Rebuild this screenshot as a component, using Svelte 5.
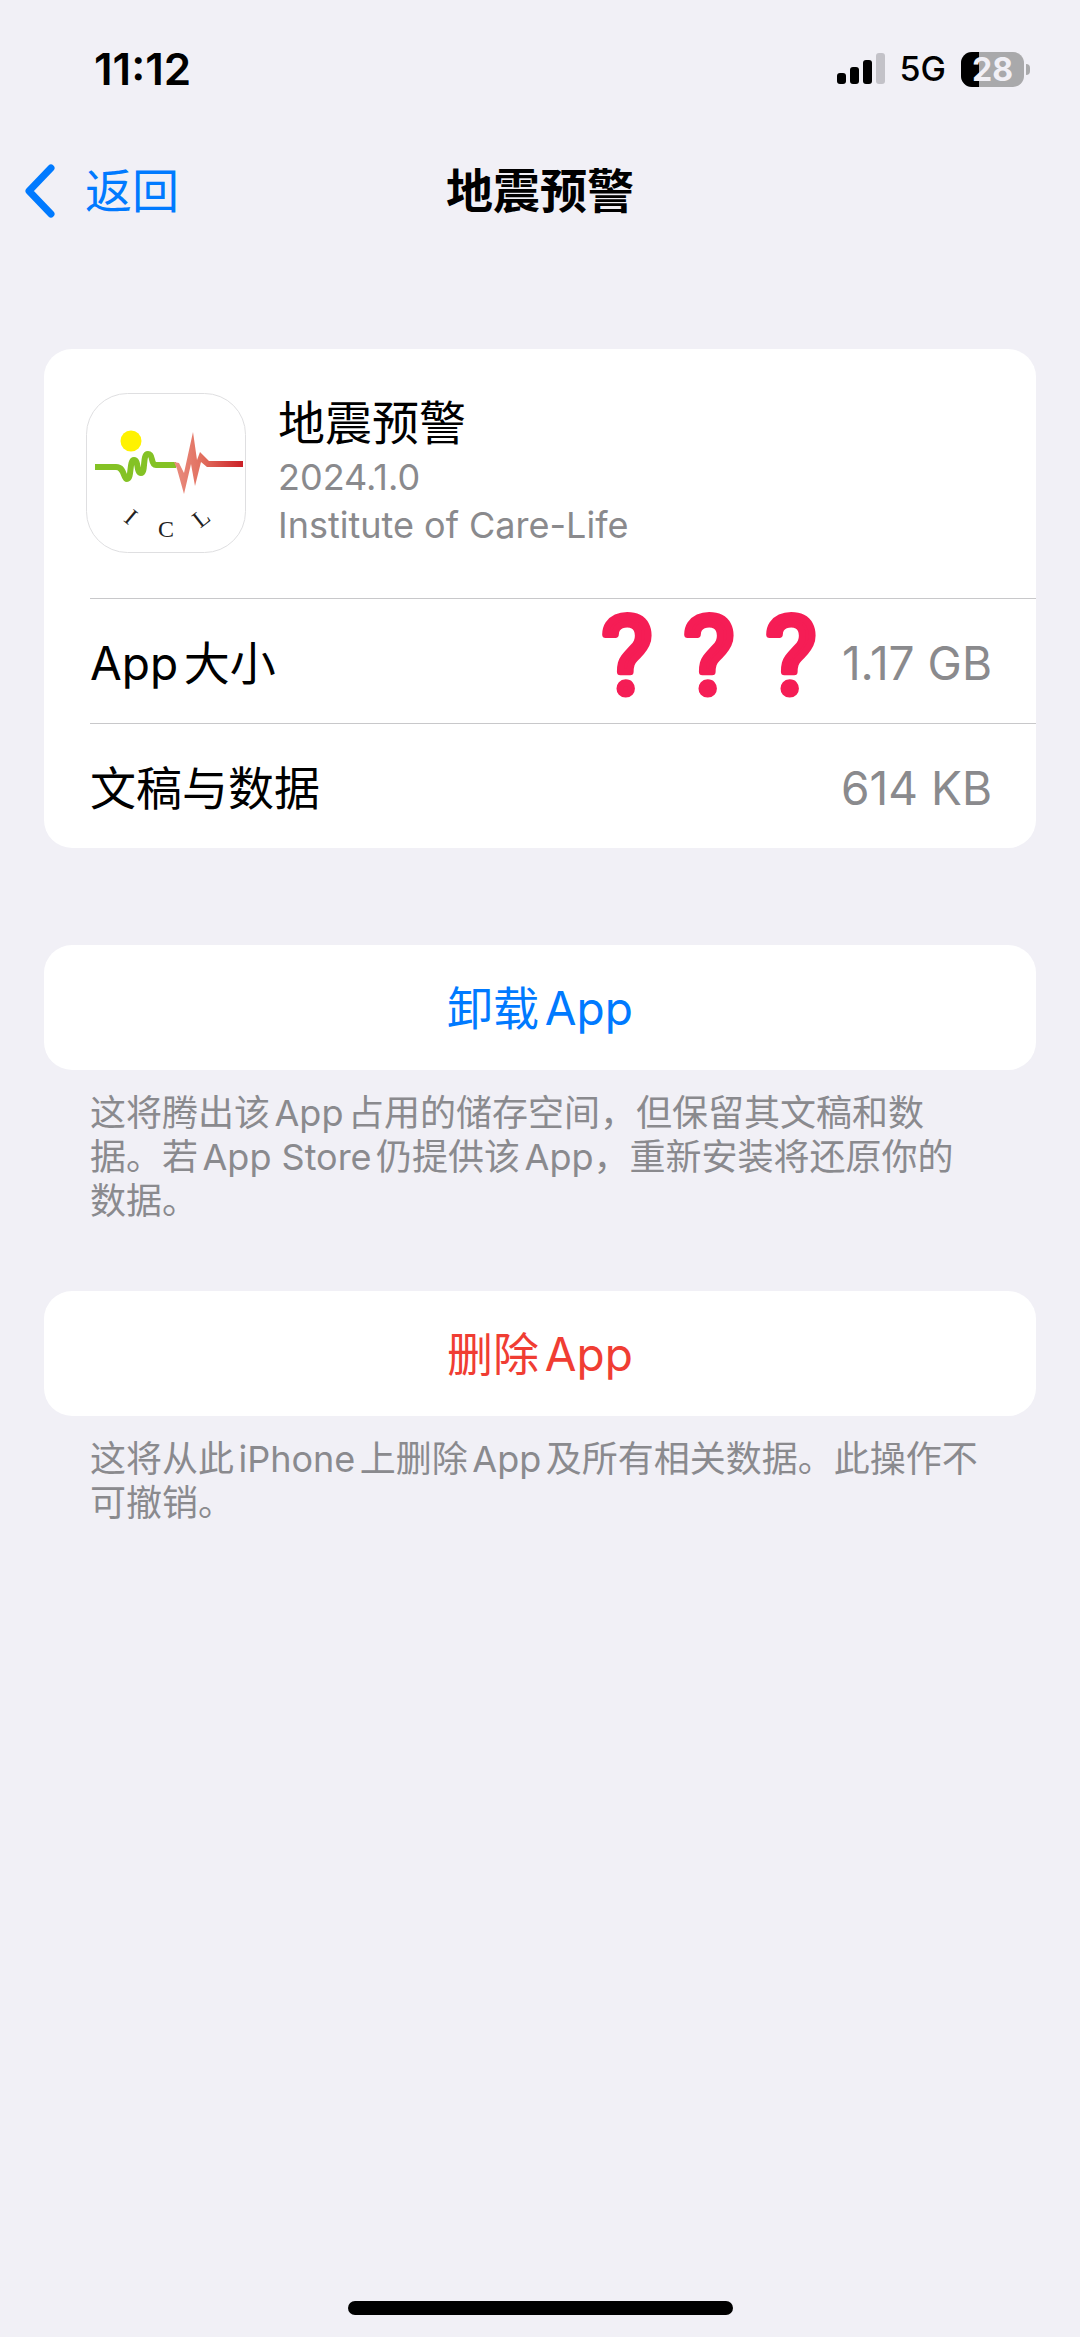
<script lang="ts">
  interface StorageRow {
    label: string;
    value: string;
    marks?: number;
  }

  const app = {
    name: '地震预警',
    version: '2024.1.0',
    vendor: 'Institute of Care-Life'
  };

  const rows: StorageRow[] = [
    { label: 'App大小', value: '1.17 GB', marks: 3 },
    { label: '文稿与数据', value: '614 KB' }
  ];

  const actions = [
    {
      label: '卸载App',
      danger: false,
      note: '这将腾出该App占用的储存空间，但保留其文稿和数据。若App Store仍提供该App，重新安装将还原你的数据。'
    },
    {
      label: '删除App',
      danger: true,
      note: '这将从此iPhone上删除App及所有相关数据。此操作不可撤销。'
    }
  ];

  const battery = 28;
  const markWidth = 82;
</script>

<div class="screen">
  <div class="status">
    <span class="time">11:12</span>
    <div class="indicators">
      <svg class="signal" viewBox="0 0 48 32" aria-hidden="true">
        <rect x="0" y="20" width="9" height="11" rx="3" />
        <rect x="13" y="14" width="9" height="17" rx="3" />
        <rect x="26" y="7" width="9" height="24" rx="3" />
        <rect class="off" x="39" y="0" width="9" height="31" rx="3" />
      </svg>
      <span class="network">5G</span>
      <div class="battery">
        <div class="cell">
          <div class="level" style="width: {battery}%"></div>
          <span class="percent">{battery}</span>
        </div>
        <div class="tip"></div>
      </div>
    </div>
  </div>

  <header class="nav">
    <a class="back" href="#back">
      <svg viewBox="0 0 30 54" aria-hidden="true">
        <path d="M26 4L4 27L26 50" />
      </svg>
      <span>返回</span>
    </a>
    <h1>{app.name}</h1>
  </header>

  <main>
    <section class="card">
      <div class="app">
        <svg class="icon" viewBox="0 0 160 160" aria-hidden="true">
          <defs>
            <linearGradient id="pulse" gradientUnits="userSpaceOnUse" x1="88" y1="0" x2="157" y2="0">
              <stop offset="0" stop-color="#e98d80" />
              <stop offset="0.4" stop-color="#e2705f" />
              <stop offset="1" stop-color="#cb2027" />
            </linearGradient>
          </defs>
          <rect class="frame" x="0.5" y="0.5" width="159" height="159" rx="41" />
          <circle cx="45" cy="48" r="10.5" fill="#fff200" />
          <path class="calm" d="M9 74H30C39 74 37 86 41 86C46 86 43 67 48 67C53 67 50 80 55 80C60 80 56 61 62 61C68 61 64 72 70 72H90" />
          <path fill="url(#pulse)" d="M88 69L93 70L98 80L107 39L111 67L114 59L123 68H157V74H121L115 69L109 93L105 71L98 101L91 76Z" />
          <g class="letters">
            <text transform="translate(45 124) rotate(40)" y="8">I</text>
            <text transform="translate(80 136)" y="8">C</text>
            <text transform="translate(115 125) rotate(-38)" y="8">L</text>
          </g>
        </svg>
        <div class="details">
          <h2>{app.name}</h2>
          <p>{app.version}</p>
          <p>{app.vendor}</p>
        </div>
      </div>
      <dl>
        {#each rows as row}
          <div class="row">
            <dt>{row.label}</dt>
            <dd>
              {#if row.marks}
                <svg class="marks" viewBox="0 0 {row.marks * markWidth} 140">
                  {#each Array(row.marks) as _, i}
                    <text x={markWidth * (i + 0.5)} y="100">?</text>
                  {/each}
                </svg>
              {/if}
              <span>{row.value}</span>
            </dd>
          </div>
        {/each}
      </dl>
    </section>

    {#each actions as action}
      <section class="action">
        <button class:danger={action.danger}>{action.label}</button>
        <p>{action.note}</p>
      </section>
    {/each}
  </main>

  <div class="home"></div>
</div>

<style>
  :global(body) {
    margin: 0;
    background: #f1f0f6;
  }

  .screen {
    display: flex;
    flex-direction: column;
    min-height: 100vh;
    box-sizing: border-box;
    background: #f1f0f6;
    color: #000;
    font-family: Inter, 'Noto Sans CJK SC', sans-serif;
    font-size: 47px;
    line-height: 60px;
    text-autospace: normal;
  }

  h1,
  h2,
  p,
  dl,
  dd {
    margin: 0;
    font-size: inherit;
    font-weight: 400;
  }

  /* status bar */
  .status {
    display: flex;
    align-items: center;
    justify-content: space-between;
    height: 138px;
    padding: 0 50px 0 94px;
  }

  .time {
    font-size: 44px;
    font-weight: 600;
  }

  .indicators {
    display: flex;
    align-items: center;
    gap: 15px;
  }

  .signal {
    width: 48px;
    height: 32px;
  }

  .signal .off {
    fill: #c3c2c8;
  }

  .network {
    font-size: 34px;
    font-weight: 500;
  }

  .battery {
    display: flex;
    align-items: center;
    gap: 2px;
  }

  .cell {
    position: relative;
    width: 63px;
    height: 35px;
    border-radius: 11px;
    background: #a9a9ab;
    text-align: center;
  }

  .level {
    position: absolute;
    inset: 0 auto 0 0;
    border-radius: 11px 0 0 11px;
    background: #000;
  }

  .percent {
    position: relative;
    display: block;
    color: #f1f0f6;
    font-size: 32px;
    font-weight: 700;
    line-height: 35px;
  }

  .tip {
    width: 4px;
    height: 11px;
    border-radius: 0 6px 6px 0;
    background: #a9a9ab;
  }

  /* navigation bar */
  .nav {
    display: grid;
    grid-template-columns: 1fr auto 1fr;
    align-items: center;
    height: 106px;
    padding: 0 25px;
  }

  .back {
    display: flex;
    align-items: center;
    gap: 30px;
    color: #007aff;
    text-decoration: none;
  }

  .back svg {
    width: 30px;
    height: 54px;
    fill: none;
    stroke: currentColor;
    stroke-width: 7;
    stroke-linecap: round;
    stroke-linejoin: round;
  }

  h1 {
    font-weight: 700;
  }

  main {
    flex: 1;
    padding: 105px 44px 0;
  }

  .card {
    border-radius: 28px;
    background: #fff;
  }

  .app {
    display: flex;
    gap: 32px;
    height: 249px;
    padding: 44px 42px 0;
    box-sizing: border-box;
  }

  .icon {
    flex: none;
    width: 160px;
    height: 160px;
  }

  .frame {
    fill: #fff;
    stroke: #dfdfe1;
  }

  .calm {
    fill: none;
    stroke: #84c225;
    stroke-width: 6;
    stroke-linejoin: round;
  }

  .letters {
    fill: #222;
    font-family: 'Liberation Serif', serif;
    font-size: 24px;
    text-anchor: middle;
  }

  .details p {
    color: #8a8a8d;
    font-size: 36px;
    line-height: 48px;
  }

  .row {
    display: flex;
    align-items: center;
    justify-content: space-between;
    height: 125px;
    margin-left: 46px;
    padding: 4px 44px 0 0;
    box-sizing: border-box;
    border-top: 1px solid #c8c8ca;
  }

  .row dt,
  .row dd {
    font-size: 46px;
  }

  .row dd {
    display: flex;
    align-items: center;
    gap: 10px;
    color: #8a8a8d;
  }

  .marks {
    width: 246px;
    height: 140px;
    fill: #f51d55;
    stroke: #f51d55;
    stroke-width: 7;
    stroke-linejoin: round;
    font-family: Roboto, sans-serif;
    font-size: 107px;
    font-weight: 400;
    text-anchor: middle;
  }

  .action {
    padding-top: 97px;
  }

  .action + .action {
    padding-top: 68px;
  }

  .action button {
    display: block;
    width: 100%;
    height: 125px;
    padding: 0;
    border: 0;
    border-radius: 28px;
    background: #fff;
    color: #007aff;
    font: inherit;
    font-size: 46px;
    text-autospace: inherit;
    cursor: pointer;
  }

  .action button.danger {
    color: #f03d33;
  }

  .action p {
    padding: 21px 53px 0 46px;
    color: #8a8a8e;
    font-size: 36px;
    line-height: 44px;
  }

  .home {
    align-self: center;
    width: 385px;
    height: 14px;
    margin-bottom: 22px;
    border-radius: 7px;
    background: #000;
  }
</style>
